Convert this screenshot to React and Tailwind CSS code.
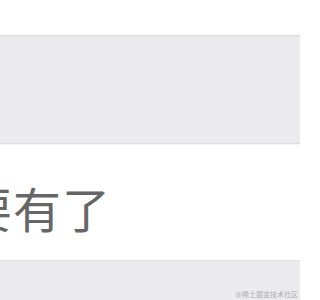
export default function App() {
  return (
    <div className="w-[300px] h-[300px] overflow-hidden bg-white flex flex-col" style={{ fontFamily: '"Noto Sans CJK SC", "Noto Sans", sans-serif' }}>
      {/* top white strip */}
      <div className="h-[35px] shrink-0 bg-white" />

      {/* gray panel */}
      <div className="h-[109px] shrink-0 bg-[#ebebed] border-t border-[#dcdcde] border-b border-b-[#dedee0] shadow-[inset_0_1px_0_#e4e4e6]" />

      {/* message row */}
      <div className="h-[116px] shrink-0 bg-white border-t border-[#f4f4f5] flex items-center">
        <div className="ml-[-36px] mt-[8px] text-[48px] leading-none text-[#666666] tracking-[1px] whitespace-nowrap">
          要有了
        </div>
      </div>

      {/* bottom gray */}
      <div className="flex-1 bg-[#ebebed] border-t border-[#e2e2e4] flex items-end justify-end pr-[2px] pb-[2px]">
        <span className="text-[7px] leading-none text-[#b0b0b2] whitespace-nowrap">@稀土掘金技术社区</span>
      </div>
    </div>
  );
}
